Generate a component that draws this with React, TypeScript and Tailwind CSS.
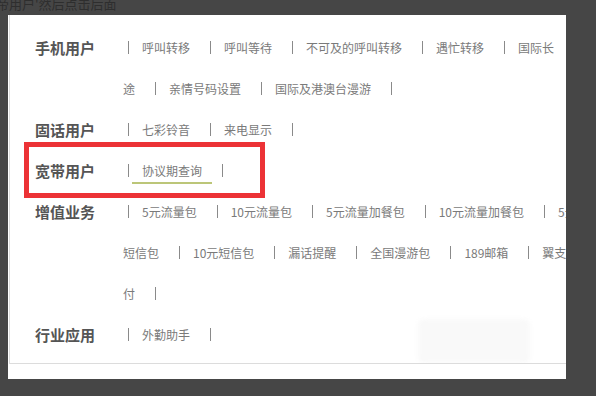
import React from 'react';

type Row = { title: string; lines: string[][]; boxed?: boolean };

// '|' marks a separator, everything else is a link label
const rows: Row[] = [
  {
    title: '手机用户',
    lines: [
      ['|', '呼叫转移', '|', '呼叫等待', '|', '不可及的呼叫转移', '|', '遇忙转移', '|', '国际长'],
      ['途', '|', '亲情号码设置', '|', '国际及港澳台漫游', '|'],
    ],
  },
  { title: '固话用户', lines: [['|', '七彩铃音', '|', '来电显示', '|']] },
  { title: '宽带用户', lines: [['|', '协议期查询', '|']], boxed: true },
  {
    title: '增值业务',
    lines: [
      ['|', '5元流量包', '|', '10元流量包', '|', '5元流量加餐包', '|', '10元流量加餐包', '|', '5元'],
      ['短信包', '|', '10元短信包', '|', '漏话提醒', '|', '全国漫游包', '|', '189邮箱', '|', '翼支'],
      ['付', '|'],
    ],
  },
  { title: '行业应用', lines: [['|', '外勤助手', '|']] },
];

const font = { fontFamily: '"Noto Sans CJK SC", "Noto Sans", sans-serif' };

function Line({ items, highlight }: { items: string[]; highlight?: boolean }) {
  const startsWithSep = items[0] === '|';
  return (
    <div className={`flex h-[41px] items-center whitespace-nowrap ${startsWithSep ? 'pl-[6px]' : 'pl-[1px]'}`}>
      {items.map((it, i) =>
        it === '|' ? (
          <span key={i} className="mr-[13px] h-[13px] w-px shrink-0 bg-[#8a8a8a]" />
        ) : (
          <span key={i} className="relative mr-5 shrink-0 text-[12px] leading-[16px] text-[#7a7a7a]">
            {it}
            {highlight && (
              <span className="absolute -left-[10px] -right-[10px] top-[19px] h-[2px] bg-[#bcc678]" />
            )}
          </span>
        )
      )}
    </div>
  );
}

export default function App() {
  return (
    <div className="h-[396px] w-[596px] overflow-hidden bg-[#464646]" style={font}>
      <div className="h-[15px] overflow-hidden text-[13px] leading-[12px] text-[#2e2e2e]">
        <div className="-ml-[4px] -mt-[2px]">帝用户'然后点击后面</div>
      </div>

      <div className="ml-[8px] h-[364px] w-[558px] bg-white">
        <div className="relative ml-px h-[349px] overflow-hidden border-b border-l border-[#dcdcdc] pl-[25px] pt-[12px]">
          <div className="absolute left-[408px] top-[304px] h-[44px] w-[112px] rounded-md bg-[#f9f9f9] blur-[2px]" />
          {rows.map((row) => (
            <div key={row.title} className="relative flex">
              <div className="flex h-[41px] w-[87px] shrink-0 items-center text-[15px] font-bold leading-[18px] text-[#555]">
                {row.title}
              </div>
              <div className="flex flex-col">
                {row.lines.map((line, i) => (
                  <Line key={i} items={line} highlight={row.boxed} />
                ))}
              </div>
              {row.boxed && (
                <div className="pointer-events-none absolute -left-[11px] -top-[8px] h-[56px] w-[241px] border-[5px] border-[#ec3236]" />
              )}
            </div>
          ))}
        </div>
      </div>
    </div>
  );
}
